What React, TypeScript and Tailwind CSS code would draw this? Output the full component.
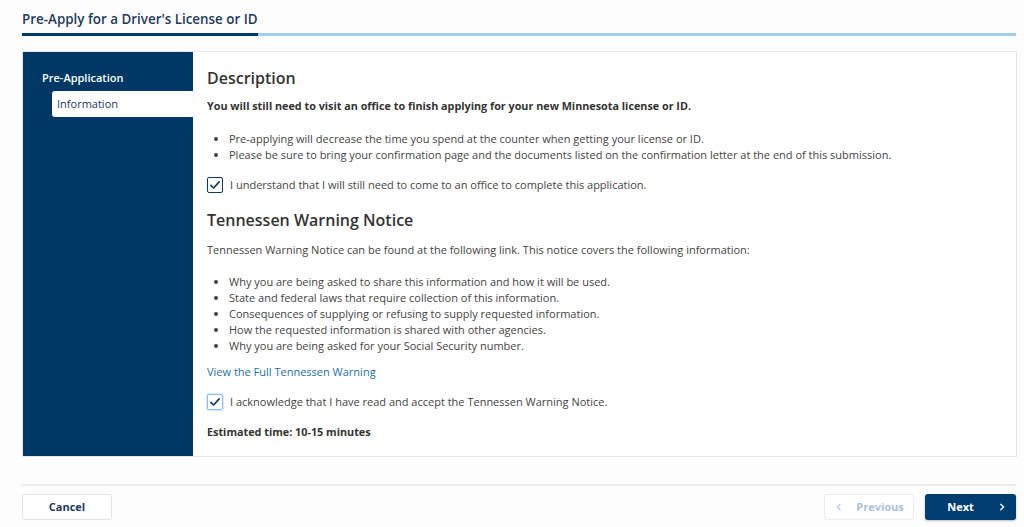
import React from "react";

const Check = () => (
  <svg viewBox="0 0 16 16" className="w-[12px] h-[12px]" fill="none">
    <path d="M2.5 8.5 L6.2 12 L13.5 3.8" stroke="#0b3a66" strokeWidth="2.2" strokeLinecap="round" strokeLinejoin="round" />
  </svg>
);

export default function App() {
  return (
    <div className="w-[1024px] h-[527px] bg-[#fdfdfd] text-[#333] font-['Open_Sans','Noto_Sans',sans-serif] overflow-hidden">
      <div className="px-[22px] pt-[9px]">
        <h1 className="text-[13.4px] font-semibold text-[#1d3a5c] leading-[20px]">Pre-Apply for a Driver's License or ID</h1>
        <div className="mt-[4px] flex h-[3px] w-[994px]">
          <div className="w-[236px] bg-[#003865]" />
          <div className="flex-1 bg-[#a3cdee]" />
        </div>

        <div className="mt-[15px] flex w-[995px] h-[406px] border border-[#e6e6e6] bg-white">
          <div className="w-[170px] bg-[#003865] pt-[18px] shrink-0">
            <div className="pl-[19px] text-[11px] font-semibold text-white leading-[16px]">Pre-Application</div>
            <div className="ml-[29px] mt-[5px] h-[26px] bg-white rounded-l-[3px] pl-[5px] flex items-center text-[11px] text-[#1d3a5c]">Information</div>
          </div>
          <div className="pl-[14px] pt-[14px] text-[11px] leading-[16px]">
            <h2 className="text-[16px] font-semibold text-[#333] leading-[24px]">Description</h2>
            <p className="mt-[8px] font-bold text-[10.8px] text-[#333]">You will still need to visit an office to finish applying for your new Minnesota license or ID.</p>
            <ul className="mt-[17px] ml-[22px] list-disc text-[#444]">
              <li>Pre-applying will decrease the time you spend at the counter when getting your license or ID.</li>
              <li>Please be sure to bring your confirmation page and the documents listed on the confirmation letter at the end of this submission.</li>
            </ul>
            <div className="mt-[14px] flex items-center gap-[7px]">
              <div className="w-[16px] h-[16px] border-[1.5px] border-[#0b3a66] rounded-[2px] bg-white flex items-center justify-center">
                <Check />
              </div>
              <span className="text-[#444]">I understand that I will still need to come to an office to complete this application.</span>
            </div>
            <h2 className="mt-[15px] text-[16px] font-semibold text-[#333] leading-[24px]">Tennessen Warning Notice</h2>
            <p className="mt-[10px] text-[#444]">Tennessen Warning Notice can be found at the following link. This notice covers the following information:</p>
            <ul className="mt-[16px] ml-[22px] list-disc text-[#444]">
              <li>Why you are being asked to share this information and how it will be used.</li>
              <li>State and federal laws that require collection of this information.</li>
              <li>Consequences of supplying or refusing to supply requested information.</li>
              <li>How the requested information is shared with other agencies.</li>
              <li>Why you are being asked for your Social Security number.</li>
            </ul>
            <a className="block mt-[10px] text-[#1a6fb0]">View the Full Tennessen Warning</a>
            <div className="mt-[14px] flex items-center gap-[7px]">
              <div className="w-[16px] h-[16px] border-[1.5px] border-[#8fc0e8] rounded-[2px] bg-white flex items-center justify-center shadow-[0_0_0_1px_#d6e9f8]">
                <Check />
              </div>
              <span className="text-[#444]">I acknowledge that I have read and accept the Tennessen Warning Notice.</span>
            </div>
            <p className="mt-[14px] font-bold text-[10.8px] text-[#333]">Estimated time: 10-15 minutes</p>
          </div>
        </div>

        <div className="mt-[27px] w-[994px] h-[2px] bg-[#ececec]" />
        <div className="mt-[8px] w-[994px] flex items-center">
          <button className="w-[90px] h-[26px] border border-[#e3e3e3] rounded-[3px] bg-white text-[11px] font-bold text-[#1d3a5c]">Cancel</button>
          <div className="flex-1" />
          <button className="w-[90px] h-[26px] border border-[#ececec] rounded-[3px] bg-white text-[11px] font-bold text-[#a9c2da] flex items-center pl-[10px] pr-[8px]">
            <svg viewBox="0 0 10 10" className="w-[8px] h-[8px]" fill="none"><path d="M6.5 1.5 L3 5 L6.5 8.5" stroke="#a9c2da" strokeWidth="1.4" strokeLinecap="round" strokeLinejoin="round" /></svg>
            <span className="flex-1 text-center pl-[12px]">Previous</span>
          </button>
          <button className="ml-[11px] w-[91px] h-[26px] rounded-[3px] bg-[#003d70] text-[11px] font-bold text-white flex items-center px-[10px] shadow-[0_1px_2px_rgba(0,0,0,0.25)]">
            <span className="flex-1 text-center pr-[12px]">Next</span>
            <svg viewBox="0 0 10 10" className="w-[8px] h-[8px]" fill="none"><path d="M3.5 1.5 L7 5 L3.5 8.5" stroke="#fff" strokeWidth="1.6" strokeLinecap="round" strokeLinejoin="round" /></svg>
          </button>
        </div>
      </div>
    </div>
  );
}
